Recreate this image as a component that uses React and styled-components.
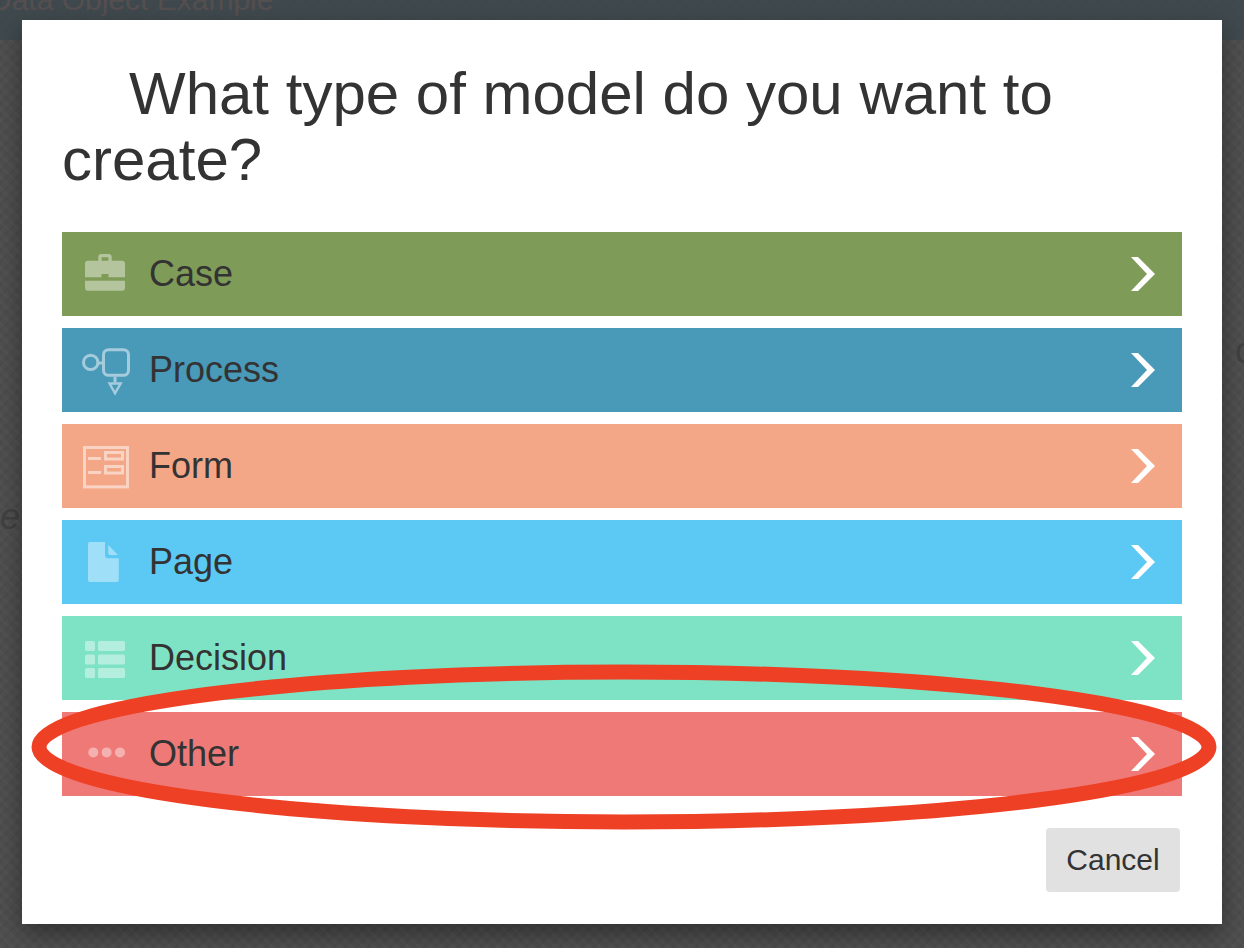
import React from 'react'
import styled, { createGlobalStyle } from 'styled-components';

const GlobalStyle = createGlobalStyle`
    * {
        box-sizing: border-box;
    }

    body {
        margin: 0;
        font-family: "Liberation Sans", Arial, sans-serif;
        color: #333333;
    }
`;

const Screen = styled.div`
    min-height: 100vh;
    display: grid;
    overflow: hidden;
    background-color: #4f4f4f;
`;

const Backdrop = styled.div`
    grid-area: 1 / 1;
    min-width: 0;
    overflow: hidden;
    display: flex;
    flex-direction: column;
    background-image:
        repeating-linear-gradient(45deg, rgba(255,255,255,0.02) 0 3px, transparent 3px 8px),
        repeating-linear-gradient(135deg, rgba(0,0,0,0.04) 0 3px, transparent 3px 8px);
`;

const TopBar = styled.div`
    height: 40px;
    background-color: rgba(60,72,78,0.8);
    color: #564f50;
    font-size: 30px;
    line-height: 34px;
    white-space: nowrap;
`;

const TopTitle = styled.div`
    margin: -17px 0 0 -10px;
`;

const PageBody = styled.div`
    flex: 1;
    display: flex;
    justify-content: space-between;
    color: #414141;
    font-size: 36px;
    line-height: 40px;
`;

const LeftText = styled.span`
    padding-top: 457px;
    font-style: italic;
`;

const RightText = styled.span`
    margin-right: -9px;
    padding-top: 291px;
`;

const Modal = styled.div`
    grid-area: 1 / 1;
    align-self: start;
    z-index: 1;
    margin: 20px 22px 24px;
    padding: 41px 40px 32px;
    background-color: white;
    box-shadow: 0 10px 24px rgba(0,0,0,0.4);
`;

const Title = styled.h1`
    margin: 0 0 39px;
    font-size: 60px;
    font-weight: 400;
    line-height: 66px;
    text-indent: 67px;
`;

const List = styled.div`
    display: flex;
    flex-direction: column;
    gap: 12px;
`;

const Item = styled.div`
    position: relative;
`;

const Option = styled.button`
    width: 100%;
    height: 84px;
    display: flex;
    align-items: center;
    gap: 19px;
    padding: 0 27px 0 20px;
    border: none;
    background-color: ${props => props.$color};
    color: inherit;
    font-family: inherit;
    font-size: 36px;
    line-height: 40px;
    text-align: left;
    cursor: pointer;
`;

const Label = styled.span`
    flex: 1;
`;

const Icon = styled.svg`
    width: 48px;
    height: 48px;
    flex-shrink: 0;
    overflow: visible;
    color: white;
    opacity: ${props => props.$outlined ? 0.5 : 0.42};
`;

const Arrow = styled.svg`
    width: 24px;
    height: 34px;
    flex-shrink: 0;
    fill: white;
`;

const Highlight = styled.svg`
    position: absolute;
    top: -48px;
    left: -31px;
    width: calc(100% + 66px);
    height: 166px;
    pointer-events: none;

    ellipse {
        rx: calc(50% - 8px);
        ry: calc(50% - 8px);
        fill: none;
        stroke: #ee4024;
        stroke-width: 15px;
    }
`;

const Footer = styled.div`
    display: flex;
    justify-content: flex-end;
    margin-top: 32px;
    padding-right: 2px;
`;

const CancelButton = styled.button`
    height: 64px;
    min-width: 134px;
    padding: 0 20px;
    border: none;
    border-radius: 4px;
    background-color: #e1e1e1;
    color: inherit;
    font-family: inherit;
    font-size: 30px;
    cursor: pointer;
`;

const icons = {
    case: (
        <path fill="currentColor" fillRule="evenodd" d="M16.3 10.7V7a3 3 0 0 1 3-3h7.4a3 3 0 0 1 3 3v3.7H40a3 3 0 0 1 3 3v13.6H26.5V24h-7v3.3H3V13.7a3 3 0 0 1 3-3zM19.6 10.7h6.8V7.2h-6.8zM3 30.7h40v7a3 3 0 0 1-3 3H6a3 3 0 0 1-3-3z"/>
    ),
    process: (
        <g fill="none" stroke="currentColor" strokeWidth="3">
            <circle cx="8.7" cy="16.4" r="7.2"/>
            <path d="M15.9 17h4.1M33 30.8v5.5"/>
            <rect x="21.5" y="3.7" width="25" height="25.6" rx="5"/>
            <path fill="currentColor" fillRule="evenodd" stroke="none" d="M25.5 36.3h15.3L33 49.8zM29.6 38.8L33 44.8l3.6-6z"/>
        </g>
    ),
    form: (
        <g fill="none" stroke="currentColor" strokeWidth="3">
            <rect x="2.5" y="5.5" width="43" height="39.4"/>
            <path d="M6 16.5h13M6 30.5h13"/>
            <rect x="23.5" y="10.5" width="17" height="6.5"/>
            <rect x="23.5" y="24.5" width="17" height="6.5"/>
        </g>
    ),
    page: (
        <path fill="currentColor" d="M8 4h15v13.3a3 3 0 0 0 3 3h10.8V42a2 2 0 0 1-2 2H8a2 2 0 0 1-2-2V6a2 2 0 0 1 2-2zM26.3 7l9.6 10h-7.6a2 2 0 0 1-2-2z"/>
    ),
    decision: (
        <g fill="currentColor">
            {[7, 20.6, 34].map((y) => (
                <React.Fragment key={y}>
                    <rect x="3" y={y} width="10" height="10" rx="1.6"/>
                    <rect x="16" y={y} width="27" height="10" rx="1.6"/>
                </React.Fragment>
            ))}
        </g>
    ),
    other: (
        <g fill="currentColor">
            <circle cx="11.3" cy="22.4" r="5"/>
            <circle cx="24.6" cy="22.4" r="5"/>
            <circle cx="38" cy="22.4" r="5"/>
        </g>
    ),
};

const models = [
    { id: 'case', name: 'Case', color: '#7f9b58' },
    { id: 'process', name: 'Process', color: '#4999b9', outlined: true },
    { id: 'form', name: 'Form', color: '#f4a787', outlined: true },
    { id: 'page', name: 'Page', color: '#5bc9f3' },
    { id: 'decision', name: 'Decision', color: '#7ee3c5' },
    { id: 'other', name: 'Other', color: '#ee7976', highlighted: true },
];

const ModelOption = ({item}) => {
  return (
    <Item>
      <Option type="button" $color={item.color}>
        <Icon viewBox="0 0 48 48" $outlined={item.outlined} aria-hidden="true">{icons[item.id]}</Icon>
        <Label>{item.name}</Label>
        <Arrow viewBox="0 0 24 34" aria-hidden="true">
            <path d="M0 0h7l17 17-17 17H0l16-17z"/>
        </Arrow>
      </Option>
      {item.highlighted && (
        <Highlight aria-hidden="true">
            <ellipse cx="50%" cy="50%"/>
        </Highlight>
      )}
    </Item>
  )
}

const App = () => {
  return (
    <Screen>
      <GlobalStyle/>
      <Backdrop aria-hidden="true">
        <TopBar>
            <TopTitle>Data Object Example</TopTitle>
        </TopBar>
        <PageBody>
            <LeftText>e</LeftText>
            <RightText>c</RightText>
        </PageBody>
      </Backdrop>
      <Modal role="dialog" aria-modal="true" aria-labelledby="dialog-title">
        <Title id="dialog-title">What type of model do you want to create?</Title>
        <List>
            {models.map((item) => (
                <ModelOption item={item} key={item.id}/>
            ))}
        </List>
        <Footer>
            <CancelButton type="button">Cancel</CancelButton>
        </Footer>
      </Modal>
    </Screen>
  )
}

export default App;
